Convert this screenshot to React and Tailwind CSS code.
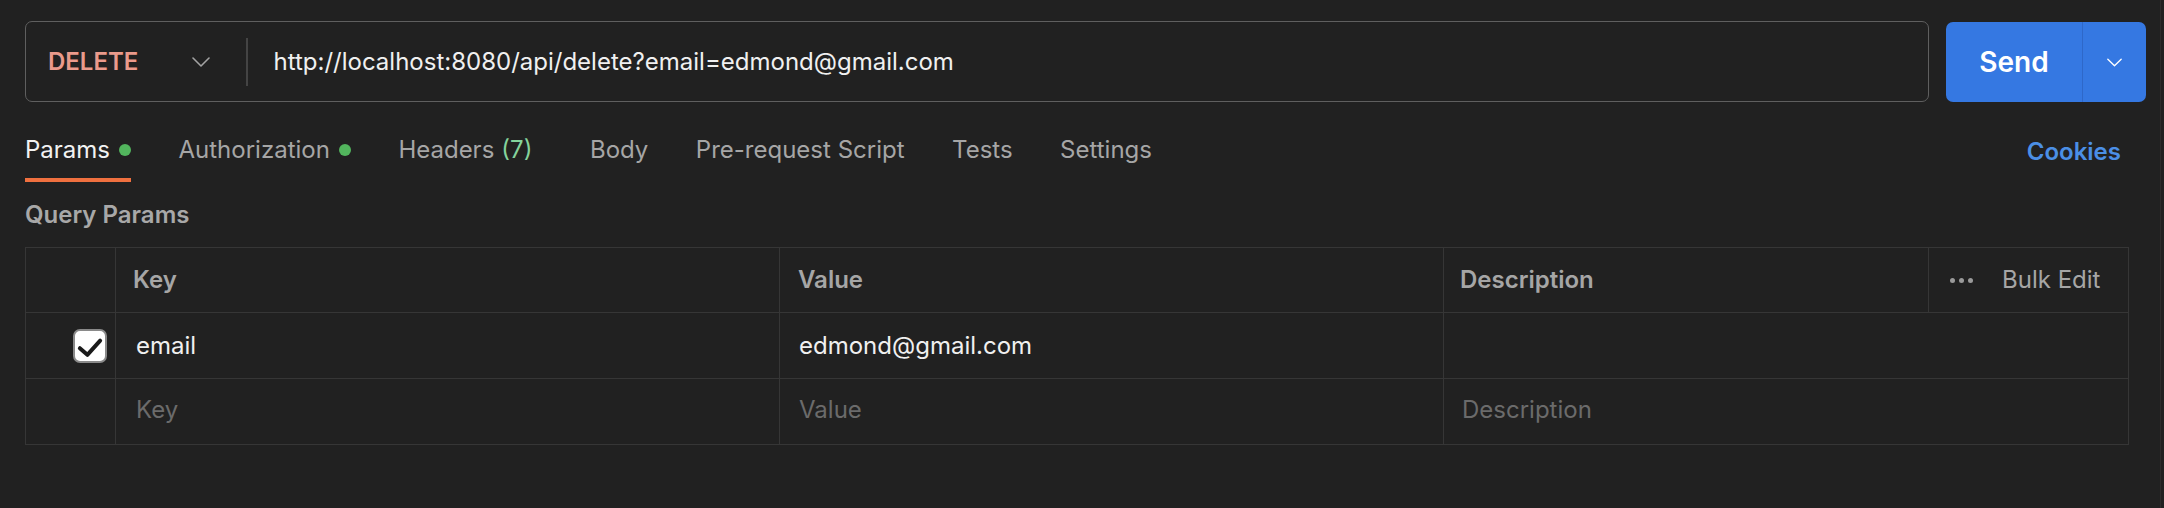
import { useState } from 'react';

// Barre de requête + onglets + tableau des paramètres de requête (thème sombre)

const TABS = [
  { id: 'params', label: 'Params', dot: true },
  { id: 'auth', label: 'Authorization', dot: true },
  { id: 'headers', label: 'Headers', count: 7 },
  { id: 'body', label: 'Body' },
  { id: 'pre', label: 'Pre-request Script' },
  { id: 'tests', label: 'Tests' },
  { id: 'settings', label: 'Settings' },
];

function Chevron({ className }) {
  return (
    <svg viewBox="0 0 18 10" className={className} fill="none">
      <path d="M1 1l8 8 8-8" stroke="currentColor" strokeWidth="1.6" strokeLinecap="round" strokeLinejoin="round" />
    </svg>
  );
}

function CheckBox() {
  return (
    <div className="w-[34px] h-[34px] rounded-[7px] border-2 border-[#8a8a8a] bg-white flex items-center justify-center">
      <svg viewBox="0 0 34 34" className="w-[34px] h-[34px]" fill="none">
        <path d="M5.5 19.5l8.5 7.5 14.5-16" stroke="#1a1a1a" strokeWidth="4.5" strokeLinecap="round" strokeLinejoin="round" />
      </svg>
    </div>
  );
}

export default function App() {
  const [active, setActive] = useState('params');

  return (
    <div className="w-[2164px] h-[508px] bg-[#212121] flex font-['Inter','Noto_Sans',sans-serif] overflow-hidden">
      <div className="w-[2160px] pl-[25px] pr-[14px] pt-[21px]">
        {/* ligne de requête */}
        <div className="flex gap-[17px]">
          <div className="flex-1 h-[81px] rounded-[7px] border-[1.5px] border-[#5f5f5f] flex items-center">
            <div className="w-[220px] flex items-center pl-[22px] pr-[36px]">
              <span className="text-[24px] font-semibold text-[#ea9a8b]">DELETE</span>
              <div className="flex-1" />
              <Chevron className="w-[18px] h-[10px] text-[#a3a3a3]" />
            </div>
            <div className="w-[1.5px] h-[48px] bg-[#444444]" />
            <span className="pl-[26px] text-[24px] text-[#f0f0f0]">
              http://localhost:8080/api/delete?email=edmond@gmail.com
            </span>
          </div>
          <div className="w-[200px] h-[80px] mt-[1px] rounded-[7px] bg-[#3578e2] flex overflow-hidden">
            <button className="w-[136px] flex items-center justify-center text-[28px] font-semibold text-white">
              Send
            </button>
            <div className="w-px bg-[#2e68c9]" />
            <div className="flex-1 flex items-center justify-center">
              <Chevron className="w-[15px] h-[9px] text-white" />
            </div>
          </div>
        </div>

        <div className="pr-[17px]">
          {/* onglets */}
          <div className="mt-[16px] flex items-stretch h-[64px]">
            <div className="flex gap-[47.5px]">
              {TABS.map((t) => {
                const on = t.id === active;
                return (
                  <button
                    key={t.id}
                    onClick={() => setActive(t.id)}
                    className={`flex items-center gap-[9px] pt-[3px] border-b-[4px] text-[24px] ${
                      on ? 'border-[#f0703f] text-[#f2f2f2]' : 'border-transparent text-[#a6a6a6]'
                    }`}
                  >
                    <span>
                      {t.label}
                      {t.count != null && <span className="ml-[7px] mr-[10px] text-[#84d39c]">({t.count})</span>}
                    </span>
                    {t.dot && <span className="w-[12px] h-[12px] rounded-full bg-[#52b55d]" />}
                  </button>
                );
              })}
            </div>
            <div className="flex-1" />
            <button className="pr-[8px] pt-[3px] text-[24px] font-semibold text-[#4b8fe6] flex items-center">
              Cookies
            </button>
          </div>

          {/* paramètres */}
          <div className="mt-[18px] text-[24px] leading-[30px] font-semibold text-[#a8a8a8]">Query Params</div>

          <div className="mt-[17px] border-[1.5px] border-[#363636] text-[24px]">
            <div className="grid grid-cols-[90px_664px_664px_485px_1fr] h-[65px] border-b-[1.5px] border-[#363636]">
              <div className="border-r-[1.5px] border-[#363636]" />
              <div className="border-r-[1.5px] border-[#363636] flex items-center pl-[17px] font-semibold text-[#a6a6a6]">Key</div>
              <div className="border-r-[1.5px] border-[#363636] flex items-center pl-[18px] font-semibold text-[#a6a6a6]">Value</div>
              <div className="border-r-[1.5px] border-[#363636] flex items-center pl-[16px] font-semibold text-[#a6a6a6]">Description</div>
              <div className="flex items-center pl-[21px] text-[#a6a6a6]">
                <span className="flex gap-[4px]">
                  <span className="w-[5px] h-[5px] rounded-full bg-[#9a9a9a]" />
                  <span className="w-[5px] h-[5px] rounded-full bg-[#9a9a9a]" />
                  <span className="w-[5px] h-[5px] rounded-full bg-[#9a9a9a]" />
                </span>
                <span className="ml-[29px]">Bulk Edit</span>
              </div>
            </div>
            <div className="grid grid-cols-[90px_664px_664px_1fr] h-[66px] border-b-[1.5px] border-[#363636]">
              <div className="border-r-[1.5px] border-[#363636] flex items-center justify-end pr-[8px]">
                <CheckBox />
              </div>
              <div className="border-r-[1.5px] border-[#363636] flex items-center pl-[20px] text-[#f0f0f0]">email</div>
              <div className="border-r-[1.5px] border-[#363636] flex items-center pl-[19px] text-[#f0f0f0]">edmond@gmail.com</div>
              <div />
            </div>
            <div className="grid grid-cols-[90px_664px_664px_1fr] h-[65px] pb-[4px]">
              <div className="border-r-[1.5px] border-[#363636] -mb-[4px]" />
              <div className="border-r-[1.5px] border-[#363636] -mb-[4px] flex items-center pl-[20px] pb-[4px] text-[#6b6b6b]">Key</div>
              <div className="border-r-[1.5px] border-[#363636] -mb-[4px] flex items-center pl-[19px] pb-[4px] text-[#6b6b6b]">Value</div>
              <div className="flex items-center pl-[18px] text-[#6b6b6b]">Description</div>
            </div>
          </div>
        </div>
      </div>
      <div className="w-px bg-[#2d2d2d]" />
      <div className="flex-1" />
    </div>
  );
}
